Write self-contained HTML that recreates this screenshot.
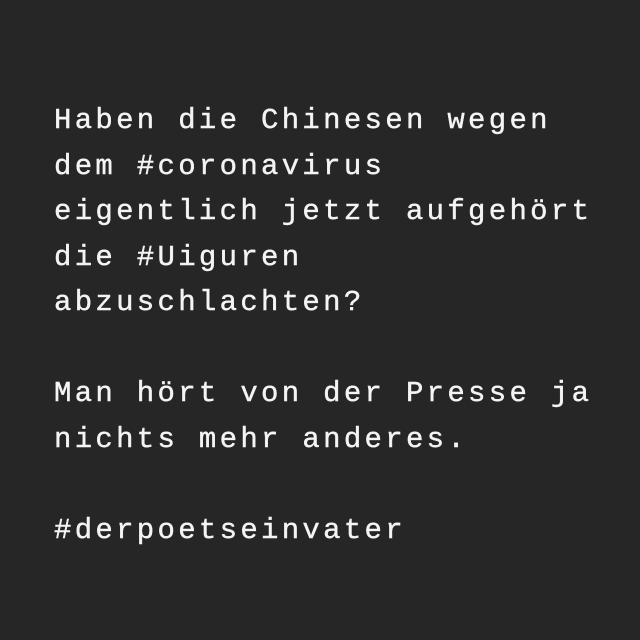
<!DOCTYPE html>
<html><head><style>
html,body{margin:0;padding:0;}
body{width:640px;height:640px;background:#262626;overflow:hidden;position:relative;}
pre{position:absolute;left:54px;top:98px;margin:0;font-family:"Liberation Mono",monospace;font-size:29px;letter-spacing:3.3px;line-height:45.5px;color:#f4f4f4;-webkit-text-stroke:0.4px #f4f4f4;}
</style></head><body>
<pre>Haben die Chinesen wegen
dem #coronavirus
eigentlich jetzt aufgehört
die #Uiguren
abzuschlachten?

Man hört von der Presse ja
nichts mehr anderes.

#derpoetseinvater</pre>
</body></html>
